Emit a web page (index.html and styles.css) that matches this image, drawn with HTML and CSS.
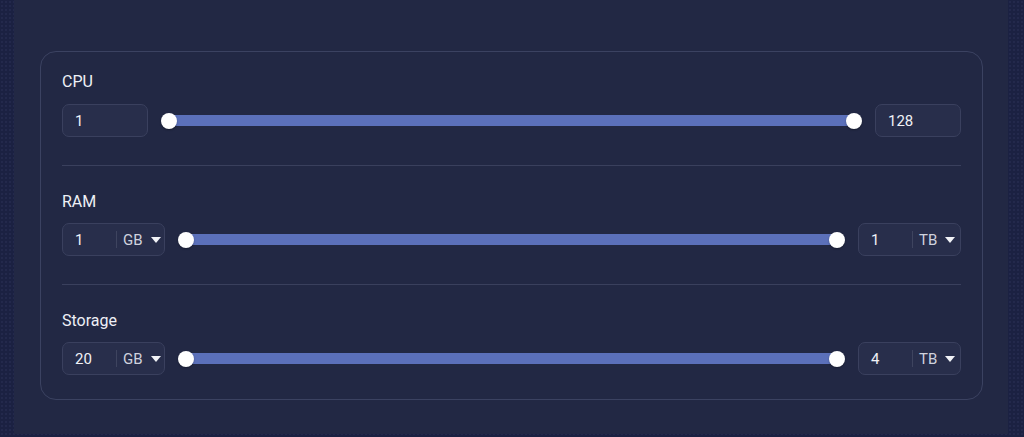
FILE: index.html
```html
<!DOCTYPE html>
<html lang="en">
<head>
  <meta charset="UTF-8">
  <meta name="viewport" content="width=device-width, initial-scale=1.0">
  <title>Resource Filters</title>
  <link rel="stylesheet" href="styles.css">
</head>
<body>

  <div class="panel">
    <div class="filter-card">

      <div class="filter-section first">
        <div class="filter-label">CPU</div>
        <div class="filter-row">
          <div class="field field-cpu"><span class="field-value">1</span></div>
          <div class="range">
            <div class="range-track"></div>
            <span class="range-thumb thumb-min"></span>
            <span class="range-thumb thumb-max"></span>
          </div>
          <div class="field field-cpu"><span class="field-value">128</span></div>
        </div>
      </div>

      <div class="filter-section">
        <div class="filter-label">RAM</div>
        <div class="filter-row">
          <div class="field">
            <span class="field-value">1</span>
            <span class="field-unit">GB <span class="caret"></span></span>
          </div>
          <div class="range">
            <div class="range-track"></div>
            <span class="range-thumb thumb-min"></span>
            <span class="range-thumb thumb-max"></span>
          </div>
          <div class="field">
            <span class="field-value">1</span>
            <span class="field-unit">TB <span class="caret"></span></span>
          </div>
        </div>
      </div>

      <div class="filter-section last">
        <div class="filter-label">Storage</div>
        <div class="filter-row">
          <div class="field">
            <span class="field-value">20</span>
            <span class="field-unit">GB <span class="caret"></span></span>
          </div>
          <div class="range">
            <div class="range-track"></div>
            <span class="range-thumb thumb-min"></span>
            <span class="range-thumb thumb-max"></span>
          </div>
          <div class="field">
            <span class="field-value">4</span>
            <span class="field-unit">TB <span class="caret"></span></span>
          </div>
        </div>
      </div>

    </div>
  </div>

</body>
</html>
```

FILE: styles.css
```css
body {
  font-family: Roboto, "Liberation Sans", sans-serif;
  margin: 0;
  padding: 0;
  height: 437px;
  overflow: hidden;
  background-color: #1b2142;
  background-image: radial-gradient(rgba(120, 130, 180, 0.18) 0.6px, transparent 0.8px);
  background-size: 4px 4px;
  color: #e6e8f0;
}
.panel {
  margin: 0 16px 0 14px;
  height: 434px;
  box-sizing: border-box;
  padding: 51px 25px 0 26px;
  background-color: #222844;
}
.filter-card {
  border: 1px solid #3b4261;
  border-radius: 16px;
  padding: 0 21px 0 21px;
  height: 349px;
  box-sizing: border-box;
}
.filter-section {
  padding: 26px 0 28px;
  border-bottom: 1px solid #3a405d;
}
.filter-section.first {
  padding-top: 20px;
}
.filter-section.last {
  border-bottom: none;
  padding-bottom: 0;
}
.filter-label {
  font-size: 16px;
  line-height: 20px;
  height: 20px;
  margin-bottom: 12px;
  color: #eef0f6;
}
.filter-section:not(.first) .filter-label {
  margin-bottom: 11px;
}
.filter-row {
  display: flex;
  align-items: center;
  gap: 14px;
}
.field {
  display: flex;
  align-items: center;
  height: 33px;
  box-sizing: border-box;
  width: 103px;
  background-color: #282e4b;
  border: 1px solid #3a405e;
  border-radius: 7px;
  font-size: 15px;
}
.field-cpu {
  width: 86px;
}
.field-value {
  width: 41px;
  padding-left: 12px;
  color: #f0f1f6;
}
.field-unit {
  display: flex;
  align-items: center;
  height: 17px;
  padding-left: 6px;
  border-left: 1px solid #3e445f;
  color: #cfd2de;
}
.caret {
  width: 0;
  height: 0;
  margin-left: 8px;
  border-left: 5px solid transparent;
  border-right: 5px solid transparent;
  border-top: 6px solid #f2f3f7;
}
.range {
  flex: 1;
  position: relative;
  height: 16px;
  margin: 0 -1px;
}
.range-track {
  margin: 2px 8px 0;
  height: 11px;
  background-color: #5b70ba;
}
.range-thumb {
  position: absolute;
  top: 0;
  width: 16px;
  height: 16px;
  border-radius: 50%;
  background-color: #ffffff;
  box-shadow: 0 1px 2px rgba(0, 0, 0, 0.3);
}
.thumb-min {
  left: 0;
}
.thumb-max {
  right: 0;
}
```
